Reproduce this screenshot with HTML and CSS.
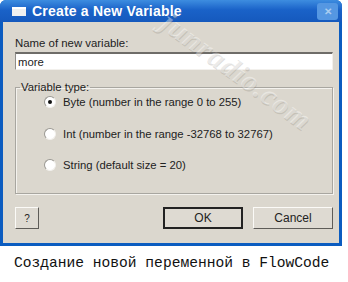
FILE: index.html
```html
<!DOCTYPE html>
<html lang="en">
<head>
  <meta charset="UTF-8">
  <title>Create a New Variable</title>
  <link rel="stylesheet" href="styles.css">
</head>
<body>
  <div class="window">
    <div class="titlebar">
      <span class="app-icon"></span>
      <span class="title">Create a New Variable</span>
      <span class="close">&#x2715;</span>
    </div>
    <div class="content">
      <label class="name-label">Name of new variable:</label>
      <div class="name-input">more</div>
      <fieldset class="group">
        <legend>Variable type:</legend>
        <div class="option"><span class="radio checked"></span>Byte (number in the range 0 to 255)</div>
        <div class="option"><span class="radio"></span>Int (number in the range -32768 to 32767)</div>
        <div class="option"><span class="radio"></span>String (default size = 20)</div>
      </fieldset>
      <div class="buttons">
        <button class="btn help">?</button>
        <button class="btn ok">OK</button>
        <button class="btn">Cancel</button>
      </div>
    </div>
    <div class="watermark">junradio.com</div>
  </div>
  <p class="caption">Создание новой переменной в FlowCode</p>
</body>
</html>
```

FILE: styles.css
```css
body {
  margin: 0;
  background: #fff;
  font-family: "Liberation Sans", Arial, sans-serif;
  width: 348px;
  height: 282px;
  overflow: hidden;
}
.window {
  position: relative;
  width: 342px;
  background: #0b5cc0;
  border-radius: 6px 6px 0 0;
  padding: 0 3px 3px 3px;
  box-sizing: border-box;
}
.titlebar {
  height: 22px;
  display: flex;
  align-items: center;
  color: #fff;
  background: linear-gradient(#3d8de0, #1a62c8 45%, #1559bd);
  margin: 0 -3px;
  padding: 0 4px 0 12px;
  border-radius: 6px 6px 0 0;
}
.app-icon {
  width: 14px;
  height: 9px;
  background: #f0f0f0;
  border-top: 2px solid #fff;
  box-sizing: border-box;
  margin-right: 6px;
}
.title {
  font-family: "Liberation Sans", Arial, sans-serif;
  font-weight: bold;
  font-size: 14px;
  letter-spacing: 0.2px;
  flex: 1;
}
.close {
  width: 21px;
  height: 17px;
  background: #5597e2;
  color: #a9cdf0;
  font-size: 10px;
  font-weight: bold;
  display: flex;
  align-items: center;
  justify-content: center;
  border-radius: 3px;
}
.content {
  background: #dbd7ce;
  padding: 15px 6px 14px 12px;
  font-size: 11.3px;
  color: #222;
}
.name-label {
  display: block;
  font-size: 11.4px;
  margin-bottom: 3px;
}
.name-input {
  height: 18px;
  background: #fff;
  border-top: 2px solid #6e6c68;
  border-left: 1px solid #8e8c88;
  border-bottom: 1px solid #f2f0ec;
  border-right: 1px solid #f2f0ec;
  padding: 1px 2px;
  box-sizing: border-box;
  line-height: 14px;
}
.group {
  margin: 11px 0 0 0;
  padding: 0 0 19px 28px;
  border: 1px solid #a8a6a0;
  box-shadow: inset 1px 1px 0 #f4f2ee, 1px 1px 0 #f4f2ee;
}
.group legend {
  padding: 0 1px;
  margin-left: -24px;
  font-size: 11.3px;
}
.option {
  display: flex;
  align-items: center;
  height: 18px;
  margin-top: 13.5px;
}
.option:first-of-type {
  margin-top: 0;
}
.radio {
  width: 10px;
  height: 10px;
  border-radius: 50%;
  background: #fff;
  border: 1px solid #9a9892;
  border-bottom-color: #f2f0ec;
  border-right-color: #f2f0ec;
  margin-right: 7px;
  position: relative;
}
.radio.checked::after {
  content: "";
  position: absolute;
  left: 3px;
  top: 3px;
  width: 4px;
  height: 4px;
  border-radius: 50%;
  background: #111;
}
.buttons {
  display: flex;
  margin-top: 13px;
  gap: 10px;
}
.btn {
  height: 22px;
  width: 80px;
  font-family: "Liberation Sans", Arial, sans-serif;
  font-size: 12px;
  color: #222;
  background: #dedad2;
  border: 1px solid;
  border-color: #fbfaf7 #5e5c58 #5e5c58 #fbfaf7;
  padding: 0;
}
.btn.help {
  width: 24px;
  margin-right: auto;
  font-size: 10px;
}
.btn.ok {
  border: 2px solid #222;
}
.watermark {
  position: absolute;
  left: 148px;
  top: 54px;
  transform: rotate(36deg);
  font-family: "Liberation Serif", serif;
  font-style: italic;
  font-weight: bold;
  font-size: 30px;
  color: rgba(255, 255, 255, 0.4);
  text-shadow: 1px 1px 0 rgba(120, 115, 105, 0.22);
  letter-spacing: 1px;
  pointer-events: none;
}
.caption {
  margin: 9px 0 0 14px;
  font-family: "Liberation Mono", "Courier New", monospace;
  font-size: 14.6px;
  color: #111;
}
```
